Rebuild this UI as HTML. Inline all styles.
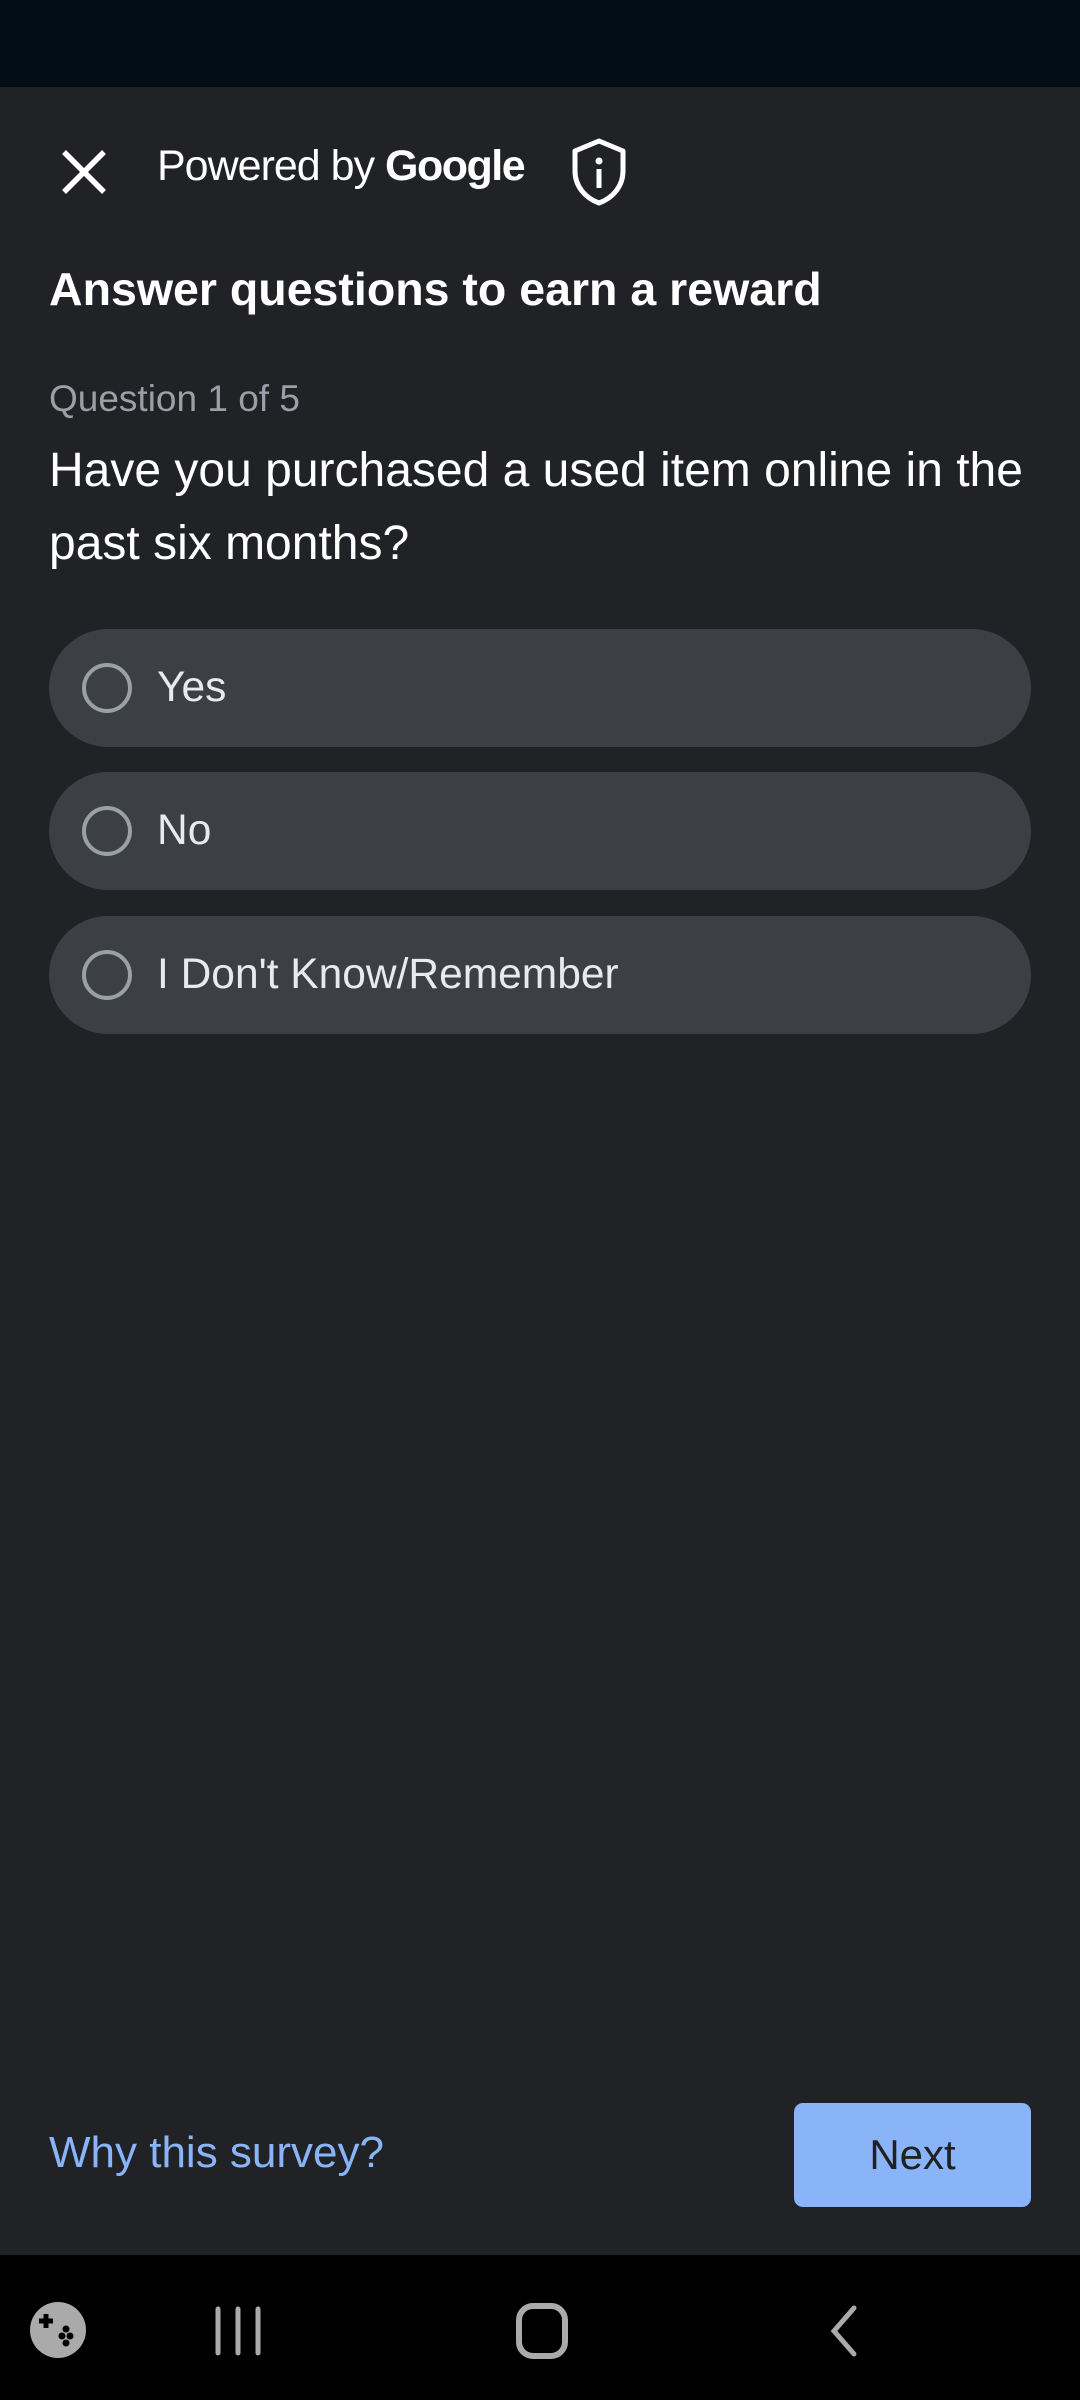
<!DOCTYPE html>
<html><head><meta charset="utf-8"><style>
*{margin:0;padding:0;box-sizing:border-box}
html,body{width:1080px;height:2400px;overflow:hidden;background:#212226;font-family:"Liberation Sans",Roboto,sans-serif;color:#e8eaed}
.status{position:absolute;left:0;top:0;width:1080px;height:87px;background:#020d16}
.nav{position:absolute;left:0;top:2255px;width:1080px;height:145px;background:#000}
.abs{position:absolute}
.pill{position:absolute;left:49px;width:982px;height:118px;border-radius:59px;background:#3c3f43}
.pill .r{position:absolute;left:33px;top:34px;width:50px;height:50px;border:4px solid #9aa0a6;border-radius:50%}
.pill span{position:absolute;left:108px;top:0;line-height:118px;font-size:42.5px;color:#e8eaed}
</style></head><body>
<div class="status"></div>
<svg class="abs" style="left:60px;top:148px" width="48" height="48" viewBox="0 0 48 48"><path d="M4 4L44 44M44 4L4 44" stroke="#fff" stroke-width="5.5"/></svg>
<div class="abs" style="left:157px;top:142px;font-size:43px;color:#fff;letter-spacing:-1px">Powered by <span style="font-weight:bold;letter-spacing:-1.5px">Google</span></div>
<svg class="abs" style="left:570px;top:138px" width="58" height="68" viewBox="0 0 58 68"><path d="M29 3L53 13V33C53 48 43 60 29 65C15 60 5 48 5 33V13Z" fill="none" stroke="#fff" stroke-width="5" stroke-linejoin="round"/><circle cx="29" cy="23" r="3.5" fill="#fff"/><rect x="26.5" y="31" width="5" height="19" fill="#fff"/></svg>
<div class="abs" style="left:49px;top:262px;font-size:46.5px;font-weight:bold;color:#fff">Answer questions to earn a reward</div>
<div class="abs" style="left:49px;top:378px;font-size:37px;color:#9aa0a6">Question 1 of 5</div>
<div class="abs" style="left:49px;top:434px;width:1020px;font-size:48px;line-height:73px;color:#fff">Have you purchased a used item online in the past six months?</div>
<div class="pill" style="top:629px"><div class="r"></div><span>Yes</span></div>
<div class="pill" style="top:772px"><div class="r"></div><span>No</span></div>
<div class="pill" style="top:916px"><div class="r"></div><span>I Don't Know/Remember</span></div>
<div class="abs" style="left:49px;top:2128px;font-size:44px;color:#8ab4f8">Why this survey?</div>
<div class="abs" style="left:794px;top:2103px;width:237px;height:104px;border-radius:9px;background:#8ab4f8;color:#202124;font-size:42px;line-height:104px;text-align:center">Next</div>
<div class="nav"></div>
<svg class="abs" style="left:28px;top:2300px" width="60" height="60" viewBox="0 0 60 60"><circle cx="30" cy="30" r="28" fill="#aaa"/><path d="M18 14v14M11 21h14" stroke="#000" stroke-width="5"/><circle cx="34" cy="36" r="3.5" fill="#000"/><circle cx="42" cy="36" r="3.5" fill="#000"/><circle cx="38" cy="43" r="3.5" fill="#000"/><circle cx="38" cy="29" r="3.5" fill="#000"/></svg>
<svg class="abs" style="left:212px;top:2305px" width="52" height="52" viewBox="0 0 52 52"><path d="M6 4V48M26 4V48M46 4V48" stroke="#aaa" stroke-width="5" stroke-linecap="round"/></svg>
<svg class="abs" style="left:514px;top:2302px" width="56" height="58" viewBox="0 0 56 58"><rect x="5" y="4" width="46" height="50" rx="14" fill="none" stroke="#aaa" stroke-width="6"/></svg>
<svg class="abs" style="left:826px;top:2304px" width="34" height="54" viewBox="0 0 34 54"><path d="M28 4L8 27L28 50" fill="none" stroke="#aaa" stroke-width="5" stroke-linecap="round"/></svg>
</body></html>
